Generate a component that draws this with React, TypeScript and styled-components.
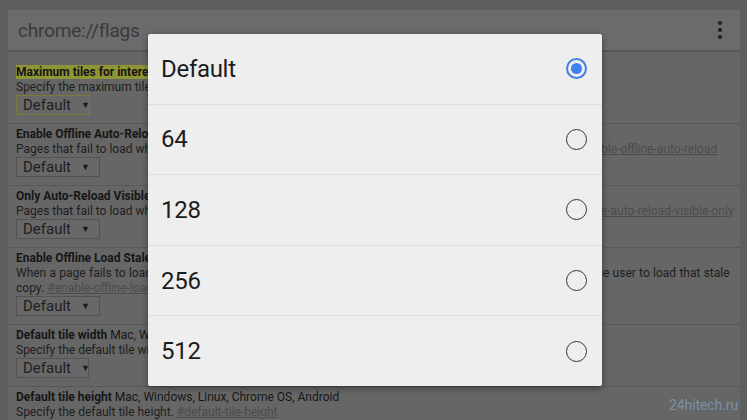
import React from "react";
import styled, { createGlobalStyle } from "styled-components";

const Global = createGlobalStyle`
  html, body { margin: 0; padding: 0; }
  body { width: 747px; height: 420px; overflow: hidden; background: #5e5e5e; }
  #root { width: 747px; height: 420px; }
`;

const Screen = styled.div`
  position: relative;
  width: 747px;
  height: 420px;
  box-sizing: border-box;
  padding: 10px 7px 0 8px;
  background: #5e5e5e;
  overflow: hidden;
  display: flex;
  flex-direction: column;
  font-family: Roboto, "Noto Sans", sans-serif;
`;

const Toolbar = styled.div`
  flex: none;
  height: 42px;
  box-sizing: border-box;
  display: flex;
  align-items: center;
  justify-content: space-between;
  padding: 0 18px 0 10px;
  background: #6b6b6b;
  border-bottom: 2px solid #575757;
`;

const Url = styled.div`
  font-size: 19px;
  color: #3a3a3a;
  letter-spacing: -0.2px;
`;

const Dots = styled.div`
  display: flex;
  flex-direction: column;
  gap: 3px;
`;

const Dot = styled.span`
  width: 4px;
  height: 4px;
  border-radius: 50%;
  background: #1e1e1e;
`;

const Content = styled.div`
  flex: 1;
  background: #666666;
  padding-top: 10px;
`;

const Row = styled.div`
  padding: 3px 8px 8px 8px;
  border-bottom: 1px solid #585858;
  font-size: 12px;
  line-height: 15px;
  white-space: nowrap;
  color: #1c1c1c;
`;

const Title = styled.div`
  color: #161616;
`;

const Name = styled.span<{ $hl?: boolean }>`
  font-weight: 700;
  background: ${(p) => (p.$hl ? "#8e9533" : "transparent")};
`;

const Desc = styled.div<{ $ws?: number }>`
  color: #1e1e1e;
  word-spacing: ${(p) => p.$ws ?? 0}px;
`;

const Link = styled.span`
  color: #4c4c4c;
  text-decoration: underline;
  word-spacing: 0;
`;

const Select = styled.div<{ $w: number; $hl?: boolean }>`
  width: ${(p) => p.$w}px;
  height: 20px;
  box-sizing: border-box;
  display: flex;
  align-items: center;
  gap: 10px;
  padding-left: 6px;
  background: #686868;
  border: 1px solid ${(p) => (p.$hl ? "#7a7a3c" : "#535353")};
  font-size: 15px;
  color: #1e1e1e;
`;

const Arrow = styled.span`
  font-size: 9px;
  color: #1a1a1a;
`;

const Dialog = styled.div`
  position: absolute;
  left: 148px;
  top: 34px;
  width: 454px;
  height: 352px;
  background: #eeeeee;
  border-radius: 2px;
  box-shadow: 0 2px 6px rgba(0, 0, 0, 0.45);
  display: flex;
  flex-direction: column;
`;

const Option = styled.div`
  flex: 1;
  display: flex;
  align-items: center;
  justify-content: space-between;
  padding: 0 15px 0 13px;
  border-top: 1px solid #dddddd;
  &:first-child { border-top: none; }
  font-size: 24px;
  color: #1c1c1c;
  letter-spacing: -0.3px;
`;

const Radio = styled.span<{ $on?: boolean }>`
  width: 21px;
  height: 21px;
  box-sizing: border-box;
  border-radius: 50%;
  border: ${(p) => (p.$on ? "2px solid #3f7fe6" : "1.5px solid #333333")};
  display: flex;
  align-items: center;
  justify-content: center;
  &::after {
    content: "";
    width: 11px;
    height: 11px;
    border-radius: 50%;
    background: ${(p) => (p.$on ? "#3f80f0" : "transparent")};
  }
`;

const Watermark = styled.div`
  position: absolute;
  right: 9px;
  bottom: 7px;
  font-size: 14px;
  color: #7a8fa9;
  letter-spacing: -0.1px;
`;

const PLATFORMS = " Mac, Windows, Linux, Chrome OS, Android";

type Flag = {
  name: string;
  hl?: boolean;
  desc: string[];
  link: string;
  sel?: number;
  platforms?: boolean;
  ws?: number;
};

const flags: Flag[] = [
  {
    name: "Maximum tiles for interest area",
    hl: true,
    desc: ["Specify the maximum tiles for the interest area."],
    link: "#max-tiles-for-interest-area",
    sel: 74,
  },
  {
    name: "Enable Offline Auto-Reload Mode",
    desc: [
      "Pages that fail to load while the browser is offline will be auto-reloaded when the browser is online again.",
    ],
    link: "#enable-offline-auto-reload",
    sel: 84,
    platforms: true,
  },
  {
    name: "Only Auto-Reload Visible Tabs",
    desc: [
      "Pages that fail to load while the browser is offline will only be auto-reloaded if their tab is visible.",
    ],
    link: "#enable-offline-auto-reload-visible-only",
    sel: 84,
    platforms: true,
  },
  {
    name: "Enable Offline Load Stale Button",
    desc: [
      "When a page fails to load, if a stale copy of the page exists in the cache, a button will be presented to allow the user to load that stale",
      "copy.",
    ],
    link: "#enable-offline-load-stale-cache",
    sel: 84,
    platforms: true,
    ws: 0.3,
  },
  {
    name: "Default tile width",
    desc: ["Specify the default tile width."],
    link: "#default-tile-width",
    sel: 73,
    platforms: true,
  },
  {
    name: "Default tile height",
    desc: ["Specify the default tile height."],
    link: "#default-tile-height",
    platforms: true,
  },
];

const options = ["Default", "64", "128", "256", "512"];

export default function App() {
  return (
    <>
      <Global />
      <Screen>
        <Toolbar>
          <Url>chrome://flags</Url>
          <Dots>
            <Dot />
            <Dot />
            <Dot />
          </Dots>
        </Toolbar>
        <Content>
          {flags.map((f) => (
            <Row key={f.name}>
              <Title>
                <Name $hl={f.hl}>{f.name}</Name>
                {f.platforms ? PLATFORMS : ""}
              </Title>
              {f.desc.map((d, i) => (
                <Desc key={i} $ws={f.ws}>
                  {d}
                  {i === f.desc.length - 1 && (
                    <>
                      {" "}
                      <Link>{f.link}</Link>
                    </>
                  )}
                </Desc>
              ))}
              {f.sel && (
                <Select $w={f.sel} $hl={f.hl}>
                  Default <Arrow>▼</Arrow>
                </Select>
              )}
            </Row>
          ))}
        </Content>
        <Dialog>
          {options.map((o, i) => (
            <Option key={o}>
              {o}
              <Radio $on={i === 0} />
            </Option>
          ))}
        </Dialog>
        <Watermark>24hitech.ru</Watermark>
      </Screen>
    </>
  );
}
